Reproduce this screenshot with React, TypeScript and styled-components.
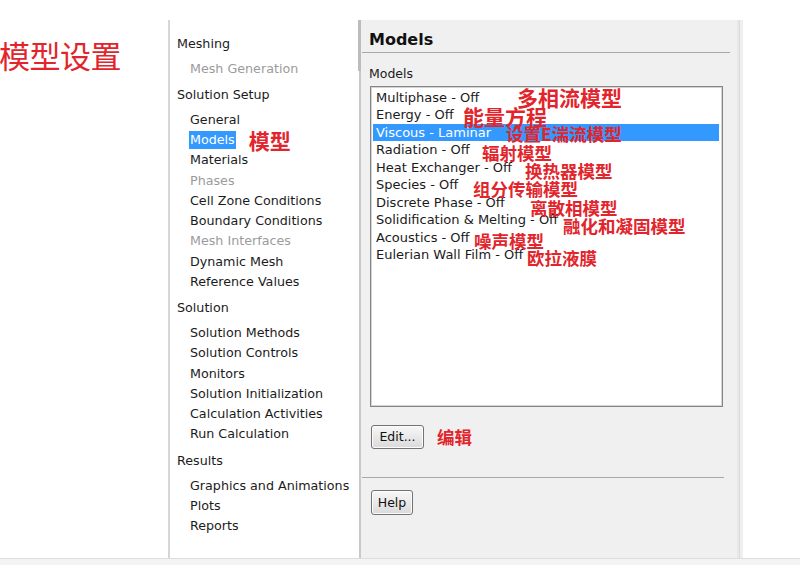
import React from 'react'
import styled, { createGlobalStyle } from 'styled-components'

const GlobalStyle = createGlobalStyle`
  html, body {
    margin: 0;
    padding: 0;
    background: #ffffff;
  }
  body {
    width: 800px;
    height: 565px;
    overflow: hidden;
    font-family: 'DejaVu Sans', 'Liberation Sans', sans-serif;
    color: #1b1b1b;
  }
`

const NOTE_RED = '#e2252c'
const CJK = `'Noto Sans CJK SC', 'Noto Sans', sans-serif`

// Tree data
type TreeItem = { label: string; muted?: boolean; selected?: boolean; note?: string }
type TreeGroup = { title: string; items: TreeItem[] }

const tree: TreeGroup[] = [
  { title: 'Meshing', items: [{ label: 'Mesh Generation', muted: true }] },
  {
    title: 'Solution Setup',
    items: [
      { label: 'General' },
      { label: 'Models', selected: true, note: '模型' },
      { label: 'Materials' },
      { label: 'Phases', muted: true },
      { label: 'Cell Zone Conditions' },
      { label: 'Boundary Conditions' },
      { label: 'Mesh Interfaces', muted: true },
      { label: 'Dynamic Mesh' },
      { label: 'Reference Values' },
    ],
  },
  {
    title: 'Solution',
    items: [
      { label: 'Solution Methods' },
      { label: 'Solution Controls' },
      { label: 'Monitors' },
      { label: 'Solution Initialization' },
      { label: 'Calculation Activities' },
      { label: 'Run Calculation' },
    ],
  },
  {
    title: 'Results',
    items: [{ label: 'Graphics and Animations' }, { label: 'Plots' }, { label: 'Reports' }],
  },
]

// Models list data: note x is measured from the row's left edge
type ModelItem = { label: string; note: string; x: number; dy: number; big?: boolean; selected?: boolean }

const models: ModelItem[] = [
  { label: 'Multiphase - Off', note: '多相流模型', x: 144, dy: 0, big: true },
  { label: 'Energy - Off', note: '能量方程', x: 90, dy: 1, big: true },
  { label: 'Viscous - Laminar', note: '设置E湍流模型', x: 133, dy: 2, selected: true },
  { label: 'Radiation - Off', note: '辐射模型', x: 109, dy: 2.5 },
  { label: 'Heat Exchanger - Off', note: '换热器模型', x: 152, dy: 3.5 },
  { label: 'Species - Off', note: '组分传输模型', x: 100, dy: 4 },
  { label: 'Discrete Phase - Off', note: '离散相模型', x: 157, dy: 6 },
  { label: 'Solidification & Melting - Off', note: '融化和凝固模型', x: 190, dy: 6 },
  { label: 'Acoustics - Off', note: '噪声模型', x: 101, dy: 3.5 },
  { label: 'Eulerian Wall Film - Off', note: '欧拉液膜', x: 154, dy: 3 },
]

// Layout
const Page = styled.div`
  width: 800px;
  height: 565px;
  display: flex;
  flex-direction: column;
`

const Main = styled.div`
  height: 558px;
  display: flex;
`

const TitleColumn = styled.div`
  width: 168px;
  flex-shrink: 0;
`

const Title = styled.h1`
  margin: 38px 0 0 -1px;
  font-family: ${CJK};
  font-size: 31px;
  font-weight: 400;
  line-height: 34px;
  color: ${NOTE_RED};
  letter-spacing: -0.5px;
`

const BottomStrip = styled.div`
  height: 6px;
  border-top: 1px solid #dcdcdc;
  background: #f4f4f4;
`

// Tree
const TreePanel = styled.nav`
  margin-top: 20px;
  width: 181px;
  flex-shrink: 0;
  border-left: 2px solid #d6d6d6;
  background: #ffffff;
  padding: 7.5px 0 0 7px;
  font-size: 12.7px;
`

const GroupTitle = styled.div`
  height: 31px;
  line-height: 31px;
  white-space: nowrap;
`

const TreeRow = styled.div`
  height: 20.25px;
  display: flex;
  align-items: center;
  padding-left: 12px;
  white-space: nowrap;
`

const TreeLabel = styled.span<{ $muted?: boolean; $selected?: boolean }>`
  padding: 1px 1px 2px;
  line-height: 15px;
  color: ${(p) => (p.$selected ? '#ffffff' : p.$muted ? '#9b9b9b' : '#1b1b1b')};
  background: ${(p) => (p.$selected ? '#3399ff' : 'transparent')};
`

const Note = styled.span<{ $size?: number }>`
  font-family: ${CJK};
  font-weight: 700;
  font-size: ${(p) => p.$size ?? 17.5}px;
  line-height: 1;
  color: ${NOTE_RED};
  white-space: nowrap;
`

const TreeNote = styled(Note)`
  margin-left: 13px;
`

// Splitter between tree and task page
const Splitter = styled.div`
  margin-top: 20px;
  width: 3px;
  flex-shrink: 0;
  display: flex;
  flex-direction: column;
`

const SplitterThumb = styled.div`
  height: 51px;
  background: #bcbcbc;
`

const SplitterRail = styled.div`
  flex: 1;
  border-right: 2px solid #c9c9c9;
  background: #ffffff;
`

// Task page
const ModelsPanel = styled.section`
  margin-top: 20px;
  width: 376px;
  flex-shrink: 0;
  background: #f0f0f0;
  border-right: 2px solid #e8e8e8;
  box-shadow: 1px 0 0 #dcdcdc, 4px 0 0 #efefef;
  display: flex;
  flex-direction: column;
`

const PanelHeader = styled.h2`
  margin: 0 7px 0 1px;
  padding: 10px 0 2px 7px;
  line-height: 20px;
  font-size: 16px;
  font-weight: 700;
  color: #111111;
  border-bottom: 1px solid #a8a8a8;
`

const GroupLabel = styled.div`
  margin: 12.5px 0 0 8px;
  line-height: 16px;
  font-size: 12.5px;
`

const ListBox = styled.div`
  margin: 4px 0 0 9px;
  width: 346px;
  height: 315px;
  padding: 2px 3px 2px 2px;
  background: #ffffff;
  border: 1px solid #858585;
  box-shadow: inset 0 0 0 1px #d4d4d4;
`

const ListRow = styled.div<{ $selected?: boolean }>`
  position: relative;
  height: 17.5px;
  line-height: 17.5px;
  padding-left: 3px;
  font-size: 13px;
  white-space: nowrap;
  color: ${(p) => (p.$selected ? '#ffffff' : '#1b1b1b')};
  background: ${(p) => (p.$selected ? '#3399ff' : 'transparent')};
`

// callout pasted on top of the list
const ListNote = styled(Note)<{ $x: number; $dy: number }>`
  position: absolute;
  left: ${(p) => p.$x}px;
  top: 50%;
  transform: translateY(calc(-50% + ${(p) => p.$dy}px));
  z-index: 1;
`

const ButtonRow = styled.div<{ $top: number }>`
  margin: ${(p) => p.$top}px 0 0 10px;
  display: flex;
  align-items: center;
  gap: 13px;
`

const Button = styled.button<{ $w: number; $h: number }>`
  width: ${(p) => p.$w}px;
  height: ${(p) => p.$h}px;
  padding: 0;
  font-family: 'DejaVu Sans', sans-serif;
  font-size: 12.5px;
  color: #111111;
  background: linear-gradient(#f7f7f7, #e9e9e9 50%, #dadada);
  border: 1px solid #737373;
  border-radius: 3px;
  box-shadow: inset 0 0 0 1px #fbfbfb;
`

const Separator = styled.hr`
  margin: 28px 13px 0 1px;
  border: 0;
  border-top: 1px solid #a8a8a8;
  height: 0;
`

export default function App() {
  return (
    <>
      <GlobalStyle />
      <Page>
        <Main>
          <TitleColumn>
            <Title>模型设置</Title>
          </TitleColumn>

          <TreePanel>
            {tree.map((group) => (
              <div key={group.title}>
                <GroupTitle>{group.title}</GroupTitle>
                {group.items.map((item) => (
                  <TreeRow key={item.label}>
                    <TreeLabel $muted={item.muted} $selected={item.selected}>
                      {item.label}
                    </TreeLabel>
                    {item.note && <TreeNote $size={21}>{item.note}</TreeNote>}
                  </TreeRow>
                ))}
              </div>
            ))}
          </TreePanel>

          <Splitter>
            <SplitterThumb />
            <SplitterRail />
          </Splitter>

          <ModelsPanel>
            <PanelHeader>Models</PanelHeader>
            <GroupLabel>Models</GroupLabel>
            <ListBox>
              {models.map((m) => (
                <ListRow key={m.label} $selected={m.selected}>
                  {m.label}
                  <ListNote $x={m.x} $dy={m.dy} $size={m.big ? 21 : 17.5}>
                    {m.note}
                  </ListNote>
                </ListRow>
              ))}
            </ListBox>
            <ButtonRow $top={18}>
              <Button $w={53} $h={24}>Edit...</Button>
              <Note>编辑</Note>
            </ButtonRow>
            <Separator />
            <ButtonRow $top={12}>
              <Button $w={42} $h={25}>Help</Button>
            </ButtonRow>
          </ModelsPanel>
        </Main>
        <BottomStrip />
      </Page>
    </>
  )
}
